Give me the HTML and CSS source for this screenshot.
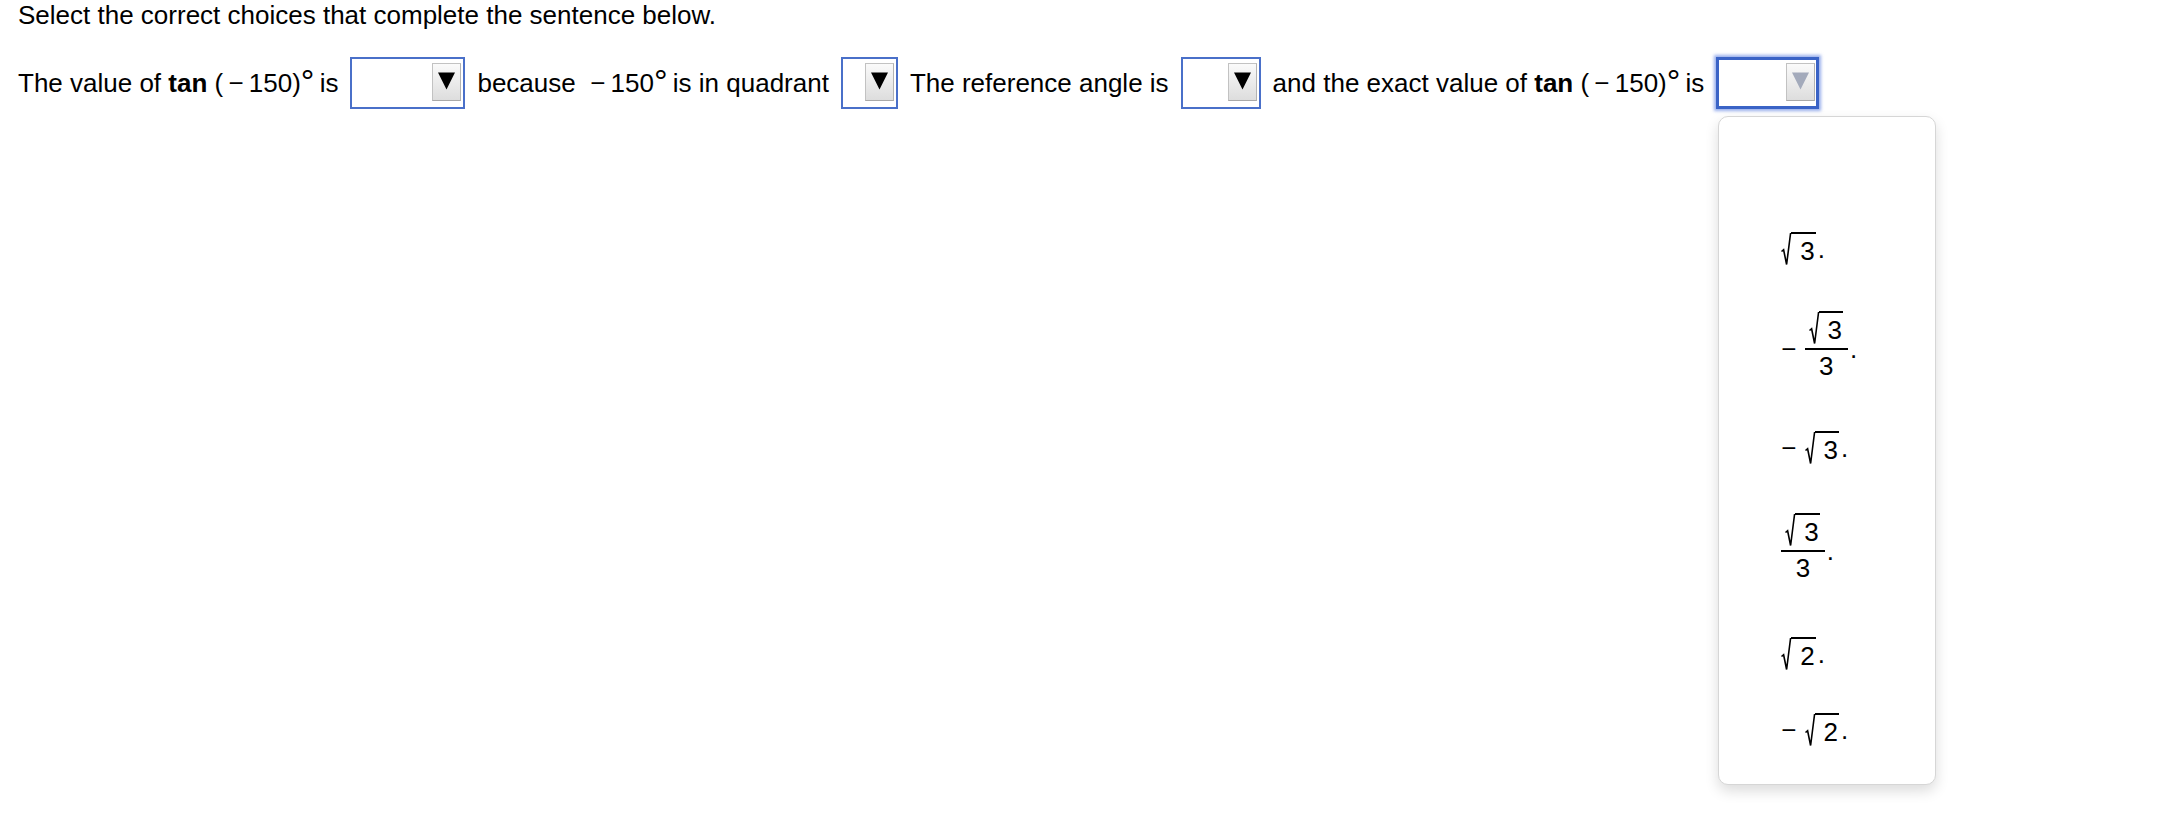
FILE: index.html
```html
<!DOCTYPE html>
<html>
<head>
<meta charset="utf-8">
<link rel="stylesheet" href="styles.css">
</head>
<body>
<div class="page">
  <p class="title">Select the correct choices that complete the sentence below.</p>
  <div class="sentence">
    <span class="txt">The value of <b>tan</b> (&thinsp;−&thinsp;150)<span class="deg">°</span> is</span>
    <span class="sel w1"><span class="btn"><svg class="tri" viewBox="0 0 17 17"><polygon points="0,0 17,0 8.5,17"/></svg></span></span>
    <span class="txt">because&nbsp; −&thinsp;150<span class="deg">°</span> is in quadrant</span>
    <span class="sel w2"><span class="btn"><svg class="tri" viewBox="0 0 17 17"><polygon points="0,0 17,0 8.5,17"/></svg></span></span>
    <span class="txt">The reference angle is</span>
    <span class="sel w3"><span class="btn"><svg class="tri" viewBox="0 0 17 17"><polygon points="0,0 17,0 8.5,17"/></svg></span></span>
    <span class="txt">and the exact value of <b>tan</b> (&thinsp;−&thinsp;150)<span class="deg">°</span> is</span>
    <div class="dd">
      <div class="sel w4 focus"><span class="btn"><svg class="tri" viewBox="0 0 17 17"><polygon points="0,0 17,0 8.5,17"/></svg></span></div>
      <div class="menu">
        <div class="opt"></div>
        <div class="opt">
          <span class="sqrt"><svg class="rad" viewBox="0 0 10 34"><path d="M0.5 19.5 L2.6 17.8 L5.6 32.5 L9.6 1"/></svg><span class="rc">3</span></span><span class="dot">.</span>
        </div>
        <div class="opt tall first">
          <span class="mn">−</span>
          <span class="frac"><span class="num"><span class="sqrt"><svg class="rad" viewBox="0 0 10 34"><path d="M0.5 19.5 L2.6 17.8 L5.6 32.5 L9.6 1"/></svg><span class="rc">3</span></span></span><span class="bar"></span><span class="den">3</span></span><span class="dot">.</span>
        </div>
        <div class="opt">
          <span class="mn">−</span>
          <span class="sqrt"><svg class="rad" viewBox="0 0 10 34"><path d="M0.5 19.5 L2.6 17.8 L5.6 32.5 L9.6 1"/></svg><span class="rc">3</span></span><span class="dot">.</span>
        </div>
        <div class="opt tall">
          <span class="frac"><span class="num"><span class="sqrt"><svg class="rad" viewBox="0 0 10 34"><path d="M0.5 19.5 L2.6 17.8 L5.6 32.5 L9.6 1"/></svg><span class="rc">3</span></span></span><span class="bar"></span><span class="den">3</span></span><span class="dot">.</span>
        </div>
        <div class="opt">
          <span class="sqrt"><svg class="rad" viewBox="0 0 10 34"><path d="M0.5 19.5 L2.6 17.8 L5.6 32.5 L9.6 1"/></svg><span class="rc">2</span></span><span class="dot">.</span>
        </div>
        <div class="opt">
          <span class="mn">−</span>
          <span class="sqrt"><svg class="rad" viewBox="0 0 10 34"><path d="M0.5 19.5 L2.6 17.8 L5.6 32.5 L9.6 1"/></svg><span class="rc">2</span></span><span class="dot">.</span>
        </div>
      </div>
    </div>
  </div>
</div>
</body>
</html>
```

FILE: styles.css
```css
html, body {
  margin: 0;
  padding: 0;
  background: #ffffff;
}
body {
  font-family: "Liberation Sans", Arial, Helvetica, sans-serif;
  font-size: 26px;
  color: #000000;
  min-height: 840px;
}
.page {
  padding: 0 0 0 18px;
}
.title {
  margin: 0;
  line-height: 30px;
}
.sentence {
  display: flex;
  align-items: center;
  gap: 12px;
  margin-top: 27px;
  height: 52px;
}
.txt {
  white-space: nowrap;
  line-height: 29px;
}
.txt b {
  font-weight: bold;
}
.deg {
  font-size: 34px;
  vertical-align: -1px;
  line-height: 0;
  margin-right: -2px;
}
.sel {
  box-sizing: border-box;
  height: 52px;
  border: 2px solid #4a70c9;
  background: #ffffff;
  display: flex;
  justify-content: flex-end;
  align-items: flex-start;
  padding: 4px 2px 0 0;
  flex: none;
}
.w1 { width: 115px; }
.w2 { width: 57px; }
.w3 { width: 80px; }
.w4 { width: 103px; }
.btn {
  box-sizing: border-box;
  width: 29px;
  height: 38px;
  border: 1px solid #c2c2c2;
  border-bottom-color: #a9a9a9;
  border-right-color: #b3b3b3;
  background: linear-gradient(#fafafa, #dddddd);
  display: flex;
  align-items: center;
  justify-content: center;
}
.tri {
  width: 17px;
  height: 18px;
  display: block;
  margin-top: -2px;
}
.tri polygon {
  fill: #000000;
}
.focus {
  border: 3px solid #3a63c6;
  box-shadow: 0 0 3px 2px rgba(70, 110, 220, 0.55);
  padding: 3px 1px 0 0;
}
.focus .tri polygon {
  fill: #a3aabb;
}
.dd {
  position: relative;
  flex: none;
  display: block;
  width: 103px;
  height: 52px;
}
.menu {
  position: absolute;
  left: 2px;
  top: 59px;
  z-index: 5;
  box-sizing: border-box;
  width: 218px;
  height: 669px;
  background: #ffffff;
  border: 1px solid #d6d6d6;
  border-radius: 10px;
  box-shadow: 0 6px 14px rgba(0, 0, 0, 0.14);
  padding: 18px 0 11px 62px;
  display: flex;
  flex-direction: column;
}
.opt {
  height: 76px;
  flex: none;
  display: flex;
  align-items: center;
  line-height: 26px;
}
.opt.tall {
  height: 130px;
}
.opt.tall.first {
  height: 123px;
  padding-bottom: 7px;
  margin-bottom: -7px;
}
.mn {
  margin-right: 8px;
}
.sqrt {
  display: inline-flex;
  align-items: flex-start;
}
.rad {
  width: 10px;
  height: 34px;
  flex: none;
  overflow: visible;
}
.rad path {
  fill: none;
  stroke: #000000;
  stroke-width: 1.6;
  stroke-linejoin: miter;
}
.rc {
  border-top: 2px solid #000000;
  padding: 4px 1px 2px 9px;
  line-height: 26px;
}
.dot {
  margin-left: 2px;
}
.frac {
  display: inline-flex;
  flex-direction: column;
  align-items: center;
}
.num {
  padding: 0 5px 3px 4px;
  height: 37px;
  box-sizing: border-box;
}
.bar {
  align-self: stretch;
  height: 2px;
  background: #000000;
}
.den {
  height: 37px;
  padding-top: 3px;
  box-sizing: border-box;
  line-height: 26px;
}
```
